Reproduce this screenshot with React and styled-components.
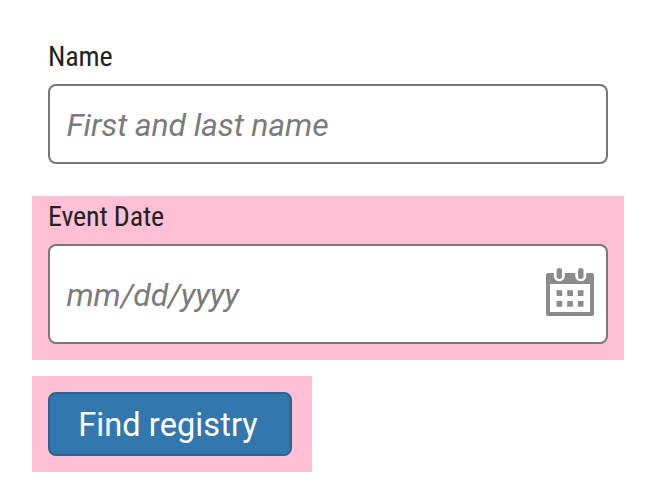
import React from "react";
import styled, { createGlobalStyle } from "styled-components";

const Global = createGlobalStyle`
  * { box-sizing: border-box; }
  body { margin: 0; background: #fff; font-family: Roboto, sans-serif; }
`;

const Form = styled.form`
  width: 658px;
  height: 492px;
  padding: 36px 34px 0 32px;
  display: flex;
  flex-direction: column;
  align-items: flex-start;
`;

const Field = styled.div`
  width: 100%;
  height: ${(p) => p.$height}px;
  padding: 0 16px;
  margin-bottom: ${(p) => p.$gap}px;
  background: ${(p) => (p.$highlight ? "#ffbfd4" : "transparent")};
`;

const Label = styled.label`
  display: block;
  height: 48px;
  line-height: 41px;
  font-family: "Roboto Condensed", Roboto, sans-serif;
  font-stretch: 75%;
  font-size: 28px;
  letter-spacing: -0.15px;
  color: #222;
  white-space: nowrap;
`;

const InputBox = styled.div`
  display: flex;
  align-items: center;
  height: ${(p) => p.$height}px;
  padding: 0 12px 0 16.5px;
  border: 2px solid #777;
  border-radius: 8px;
  background: #fff;
`;

const Input = styled.input`
  flex: 1;
  min-width: 0;
  height: 100%;
  padding: 2px 0 0;
  border: 0;
  outline: 0;
  background: transparent;
  font: 32px Roboto, sans-serif;
  letter-spacing: -0.15px;
  &::placeholder {
    color: #7b7b7b;
    font-style: italic;
    opacity: 1;
  }
`;

const CalendarIcon = styled.svg`
  flex: none;
  width: 48px;
  height: 48px;
  margin-bottom: 4px;
`;

const ButtonArea = styled.div`
  padding: 16px 20px 16px 16px;
  background: #ffbfd4;
`;

const Button = styled.button`
  display: block;
  width: 244px;
  height: 64px;
  padding: 2px 4px 0 0;
  border: 2px solid #2a6592;
  border-radius: 8px;
  background: #3277ae;
  color: #fff;
  font: 400 32.5px Roboto, sans-serif;
  letter-spacing: 0.1px;
`;

function Calendar() {
  return (
    <CalendarIcon viewBox="0 0 48 48" aria-hidden="true">
      <rect y="5" width="48" height="43" rx="2" fill="#8b8b8b" />
      <rect x="4" y="16" width="40" height="28" fill="#fff" />
      {[13.3, 34.8].map((x) => (
        <g key={x} strokeLinecap="round">
          <path d={`M${x} 2.7V7.8`} stroke="#fff" strokeWidth="11" />
          <path d={`M${x} 2.7V8.3`} stroke="#8b8b8b" strokeWidth="5.4" />
        </g>
      ))}
      <path
        fill="#8b8b8b"
        d="M10.5 22.3h5.7V28h-5.7zM21.2 22.3h5.7V28h-5.7zM31.8 22.3h5.7V28h-5.7zM10.5 33h5.7v5.7h-5.7zM21.2 33h5.7v5.7h-5.7zM31.8 33h5.7v5.7h-5.7z"
      />
    </CalendarIcon>
  );
}

export default function App() {
  return (
    <>
      <Global />
      <Form>
        <Field $height={128} $gap={32}>
          <Label htmlFor="name">Name</Label>
          <InputBox $height={80}>
            <Input id="name" placeholder="First and last name" />
          </InputBox>
        </Field>
        <Field $height={164} $gap={16} $highlight>
          <Label htmlFor="date">Event Date</Label>
          <InputBox $height={100}>
            <Input id="date" placeholder="mm/dd/yyyy" />
            <Calendar />
          </InputBox>
        </Field>
        <ButtonArea>
          <Button type="button">Find registry</Button>
        </ButtonArea>
      </Form>
    </>
  );
}
